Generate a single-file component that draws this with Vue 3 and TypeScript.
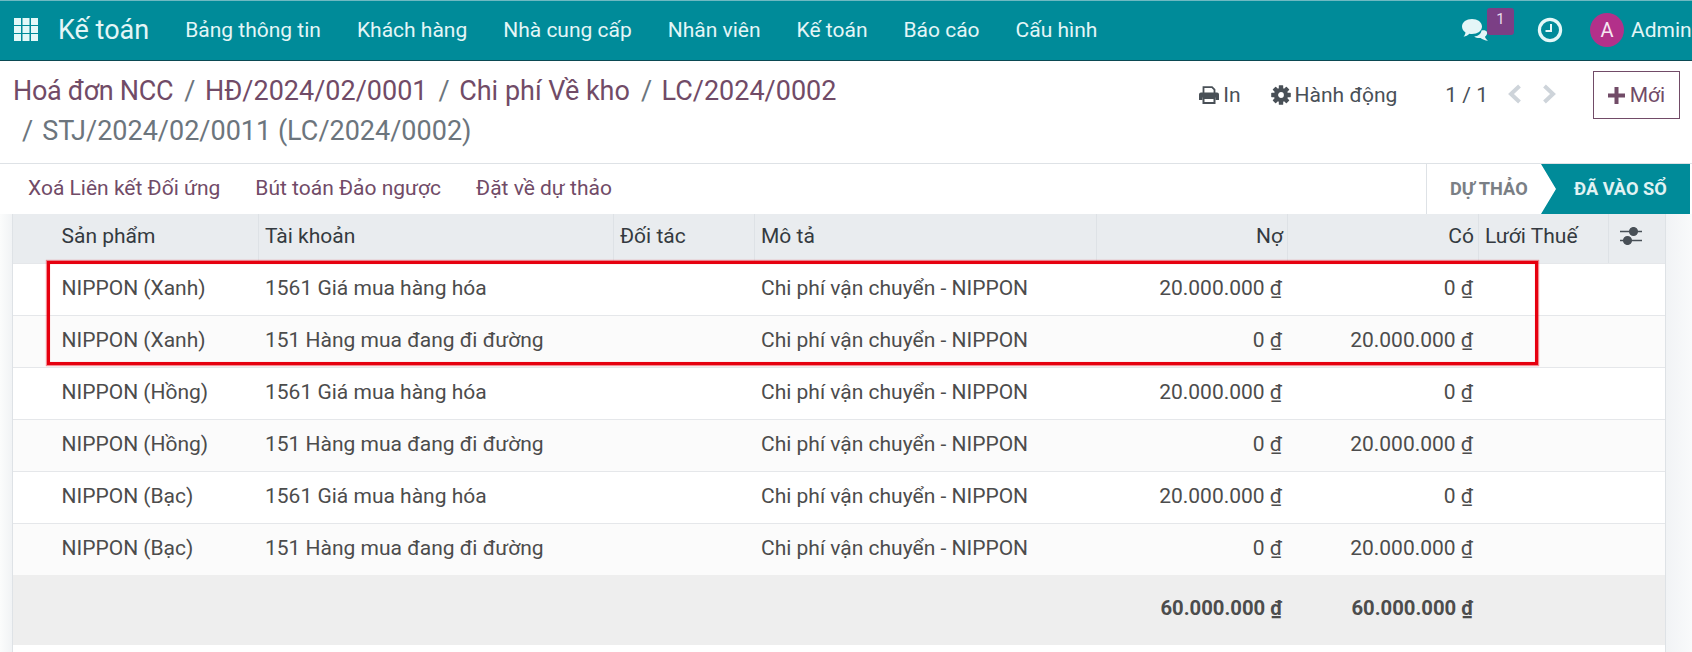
<script setup lang="ts">
interface JournalRow {
  product: string;
  account: string;
  label: string;
  debit: string;
  credit: string;
}

const menus = ['Bảng thông tin', 'Khách hàng', 'Nhà cung cấp', 'Nhân viên', 'Kế toán', 'Báo cáo', 'Cấu hình'];
const actions = ['Xoá Liên kết Đối ứng', 'Bút toán Đảo ngược', 'Đặt về dự thảo'];
const colors = ['Xanh', 'Hồng', 'Bạc'];

const rows: JournalRow[] = colors.flatMap((color) => [
  {
    product: `NIPPON (${color})`,
    account: '1561 Giá mua hàng hóa',
    label: 'Chi phí vận chuyển - NIPPON',
    debit: '20.000.000',
    credit: '0',
  },
  {
    product: `NIPPON (${color})`,
    account: '151 Hàng mua đang đi đường',
    label: 'Chi phí vận chuyển - NIPPON',
    debit: '0',
    credit: '20.000.000',
  },
]);

const cogTeeth = [0, 45, 90, 135, 180, 225, 270, 315];
</script>

<template>
  <div class="page">
    <header class="navbar">
      <svg class="apps" viewBox="0 0 24 23" width="24" height="23">
        <g v-for="y in [0, 8, 16]" :key="y">
          <rect v-for="x in [0, 8.5, 17]" :key="x" :x="x" :y="y" width="7" height="7" />
        </g>
      </svg>
      <span class="brand">Kế toán</span>
      <nav class="menu">
        <a v-for="item in menus" :key="item">{{ item }}</a>
      </nav>
      <div class="systray">
        <div class="chat">
          <svg viewBox="0 0 26 22" width="26" height="22">
            <path d="M19.5 11.5c2.2-.6 4.4-.4 5.3 1.3 1 2-.3 3.9-1.8 4.9.2 1.4 1.4 2.9 3 4-3-.3-5.5-1.3-7.5-2.8-2.4.3-4.8-.3-6.3-1.5 3.6-.2 6.8-2.3 7.3-5.9z" />
            <path d="M10 0c5.5 0 10 3 10 7.5S15.5 15 10 15c-.9 0-1.8-.1-2.6-.2C5.9 16.3 3.9 17.4 1.5 17.8c1-1.1 1.8-2.6 2-4.3C1.4 12.2 0 10 0 7.5 0 3 4.5 0 10 0z" />
          </svg>
          <span class="badge">1</span>
        </div>
        <svg class="clock" viewBox="0 0 26 26" width="26" height="26">
          <circle cx="13" cy="13" r="10.6" />
          <path d="M14 7v7H8.5" />
        </svg>
        <div class="user">
          <span class="avatar">A</span>
          <span class="username">Admin</span>
        </div>
      </div>
    </header>

    <section class="control">
      <div class="breadcrumb">
        <a>Hoá đơn NCC</a><i>/</i>
        <a>HĐ/2024/02/0001</a><i>/</i>
        <a>Chi phí Về kho</a><i>/</i>
        <a>LC/2024/0002</a>
        <span class="current"><i>/</i>STJ/2024/02/0011 (LC/2024/0002)</span>
      </div>
      <div class="tools">
        <span class="tool print">
          <svg viewBox="0 0 20 18" width="20" height="18">
            <path class="outline" d="M4.5 8V1.2h8.5l2.5 2.5V8" />
            <path d="M2 6.5h16a2 2 0 0 1 2 2V14h-3.5v-2.5h-13V14H0V8.5a2 2 0 0 1 2-2z" />
            <path d="M3.5 11h13v7h-13zM5.5 13v3h9v-3z" fill-rule="evenodd" />
          </svg>
          In
        </span>
        <span class="tool action">
          <svg viewBox="0 0 20 20" width="20" height="20">
            <circle class="outline ring" cx="10" cy="10" r="5" />
            <rect
              v-for="deg in cogTeeth"
              :key="deg"
              x="7.8"
              y="0.2"
              width="4.4"
              height="4.6"
              rx="0.6"
              :transform="`rotate(${deg} 10 10)`"
            />
          </svg>
          Hành động
        </span>
        <span class="pager">1 / 1</span>
        <svg class="chev" viewBox="0 0 14 20" width="14" height="20"><path d="M11.5 2 3 10l8.5 8" /></svg>
        <svg class="chev next" viewBox="0 0 14 20" width="14" height="20"><path d="M2.5 2 11 10l-8.5 8" /></svg>
        <button class="new-btn">
          <svg viewBox="0 0 17 17" width="17" height="17">
            <path d="M6.5 0h4v6.5H17v4h-6.5V17h-4v-6.5H0v-4h6.5z" />
          </svg>
          Mới
        </button>
      </div>
    </section>

    <section class="statusbar">
      <div class="buttons">
        <a v-for="item in actions" :key="item">{{ item }}</a>
      </div>
      <div class="states">
        <span class="state">Dự thảo</span>
        <span class="state active">Đã vào sổ</span>
      </div>
    </section>

    <main class="sheet">
      <div class="list">
        <table>
          <colgroup>
            <col class="c-product" />
            <col class="c-account" />
            <col class="c-partner" />
            <col class="c-label" />
            <col class="c-money" />
            <col class="c-money" />
            <col class="c-tax" />
            <col class="c-opt" />
          </colgroup>
          <thead>
            <tr>
              <th class="first">Sản phẩm</th>
              <th>Tài khoản</th>
              <th>Đối tác</th>
              <th>Mô tả</th>
              <th class="num">Nợ</th>
              <th class="num">Có</th>
              <th>Lưới Thuế</th>
              <th class="opt">
                <svg viewBox="0 0 22 18" width="22" height="18">
                  <path d="M0 4.5h22M0 13.5h22" />
                  <circle cx="13.5" cy="4.5" r="3.8" />
                  <circle cx="7.5" cy="13.5" r="3.8" />
                </svg>
              </th>
            </tr>
          </thead>
          <tbody>
            <tr v-for="(row, i) in rows" :key="i">
              <td class="first">{{ row.product }}</td>
              <td>{{ row.account }}</td>
              <td></td>
              <td>{{ row.label }}</td>
              <td class="num">{{ row.debit }} ₫</td>
              <td class="num">{{ row.credit }} ₫</td>
              <td></td>
              <td></td>
            </tr>
          </tbody>
          <tfoot>
            <tr>
              <td colspan="4"></td>
              <td class="num">60.000.000 ₫</td>
              <td class="num">60.000.000 ₫</td>
              <td colspan="2"></td>
            </tr>
          </tfoot>
        </table>
      </div>
      <div class="highlight"></div>
    </main>
  </div>
</template>

<style>
html,
body {
  margin: 0;
  background: #fff;
  overflow: hidden;
}
</style>

<style scoped>
.page {
  width: 1692px;
  height: 652px;
  overflow: hidden;
  display: flex;
  flex-direction: column;
  font-family: Roboto, 'Liberation Sans', sans-serif;
  font-size: 21px;
  color: #4c4c4c;
  background: #fff;
}

.navbar {
  flex: 0 0 61px;
  box-sizing: border-box;
  display: flex;
  align-items: center;
  padding: 0 0 2px 14px;
  background: #008b99;
  border-top: 1px solid #6fb9c2;
  border-bottom: 1px solid #0b4a53;
  color: #e4f6f7;
  white-space: nowrap;
}

.apps {
  fill: #e4f8f8;
}

.brand {
  margin-left: 20px;
  font-size: 27px;
}

.menu {
  display: flex;
  gap: 36px;
  margin-left: 36px;
}

.systray {
  margin-left: auto;
  display: flex;
  align-items: center;
}

.chat {
  position: relative;
  width: 26px;
  height: 22px;
  margin-right: 49px;
}

.chat svg {
  display: block;
  fill: #e4f6f7;
}

.badge {
  position: absolute;
  left: 25px;
  top: -11px;
  width: 27px;
  height: 27px;
  border-radius: 3px;
  background: #7b3f85;
  font-size: 15px;
  line-height: 22px;
  text-align: center;
  color: #e8dcea;
}

.clock {
  fill: none;
  stroke: #e4f8f8;
  stroke-width: 3.2;
  margin-right: 27px;
}

.clock path {
  stroke-width: 2;
}

.user {
  display: flex;
  align-items: center;
  width: 102px;
  gap: 7px;
}

.avatar {
  flex: 0 0 34px;
  height: 34px;
  border-radius: 50%;
  background: #b3308a;
  color: #f7e6f2;
  font-size: 20px;
  line-height: 34px;
  text-align: center;
}

.control {
  flex: 0 0 102px;
  display: flex;
  justify-content: space-between;
  padding: 10px 12px 0 13px;
  box-sizing: border-box;
}

.breadcrumb {
  width: 900px;
  font-size: 27px;
  line-height: 40px;
  color: #714b67;
}

.breadcrumb a:first-child {
  letter-spacing: -0.3px;
}

.breadcrumb i {
  font-style: normal;
  color: #6c757d;
  margin: 0 9.5px 0 11px;
}

.current {
  display: block;
  color: #6c757d;
}

.current i {
  margin: 0 9px;
}

.tools {
  display: flex;
  align-items: flex-start;
  color: #495057;
}

.tool,
.pager {
  display: flex;
  align-items: center;
  gap: 4px;
  height: 26px;
  margin-top: 11px;
}

.tool svg {
  fill: #495057;
}

.outline {
  fill: none;
  stroke: #495057;
  stroke-width: 1.8;
}

.ring {
  stroke-width: 4.2;
}

.action {
  margin-left: 30px;
}

.pager {
  margin-left: 48px;
}

.chev {
  margin: 13px 0 0 20px;
  fill: none;
  stroke: #ced4da;
  stroke-width: 4;
}

.next {
  margin-left: 20px;
}

.new-btn {
  margin-left: 37px;
  width: 87px;
  height: 48px;
  display: flex;
  align-items: center;
  justify-content: center;
  gap: 5px;
  border: 1px solid #714b67;
  background: #fff;
  color: #714b67;
  font: inherit;
  padding: 0;
}

.new-btn svg {
  fill: #714b67;
}

.statusbar {
  flex: 0 0 51px;
  box-sizing: border-box;
  display: flex;
  justify-content: space-between;
  border-top: 1px solid #dee2e6;
  padding-right: 2px;
}

.buttons {
  display: flex;
  align-items: center;
  gap: 35px;
  padding: 0 0 2px 28px;
  color: #714b67;
}

.states {
  display: flex;
  font-size: 18.2px;
  font-weight: 700;
  text-transform: uppercase;
}

.state {
  display: flex;
  align-items: center;
  width: 115px;
  box-sizing: border-box;
  padding: 0 0 2px 23px;
  color: #7a7f85;
  border-left: 1px solid #dee2e6;
}

.active {
  width: 149px;
  padding-left: 33px;
  border-left: 0;
  color: #e0f3f4;
  background: #008b99;
  clip-path: polygon(0 0, 100% 0, 100% 100%, 0 100%, 15px 50%);
}

.sheet {
  position: relative;
  flex: 1;
  padding: 0 26px 0 12px;
  display: flex;
  background: linear-gradient(90deg, #fbfcfc, #f1f3f5 12px, #f1f3f5 1666px, #f9fafb);
}

.list {
  flex: 1;
  background: #fff;
  border-left: 1px solid #dee2e6;
  border-right: 1px solid #dee2e6;
}

table {
  width: 1652px;
  table-layout: fixed;
  border-collapse: separate;
  border-spacing: 0;
}

.c-product { width: 246px; }
.c-account { width: 355px; }
.c-partner { width: 141px; }
.c-label { width: 342px; }
.c-money { width: 191px; }
.c-tax { width: 130px; }
.c-opt { width: 56px; }

th,
td {
  padding: 0 6px;
  text-align: left;
  white-space: nowrap;
}

th {
  height: 49px;
  box-sizing: border-box;
  padding-bottom: 6px;
  font-weight: 400;
  color: #343a40;
  background: #e9ecef;
  border-right: 1px solid #dee2e6;
}

th:last-child {
  border-right: 0;
}

th.first,
td.first {
  padding-left: 48.5px;
}

th.num,
td.num {
  text-align: right;
}

th.num {
  padding-right: 4px;
}

.opt svg {
  display: block;
  margin: 0 0 0 5px;
  fill: #495057;
  stroke: #495057;
  stroke-width: 1.5;
}

tbody td {
  height: 52px;
  box-sizing: border-box;
  border-top: 1px solid #e5e7ea;
  padding-bottom: 3px;
}

tbody tr:nth-child(even) td {
  background: #fbfbfb;
}

tfoot td {
  height: 70px;
  box-sizing: border-box;
  background: #eeeeee;
  font-size: 20.3px;
  font-weight: 700;
  padding-bottom: 5px;
}

.highlight {
  position: absolute;
  left: 47px;
  top: 47px;
  width: 1491px;
  height: 104px;
  box-sizing: border-box;
  border: 3px solid #e6000f;
  box-shadow: 0 0 1px 1px rgba(230, 0, 15, 0.45), inset 0 0 1px rgba(230, 0, 15, 0.45);
}
</style>
